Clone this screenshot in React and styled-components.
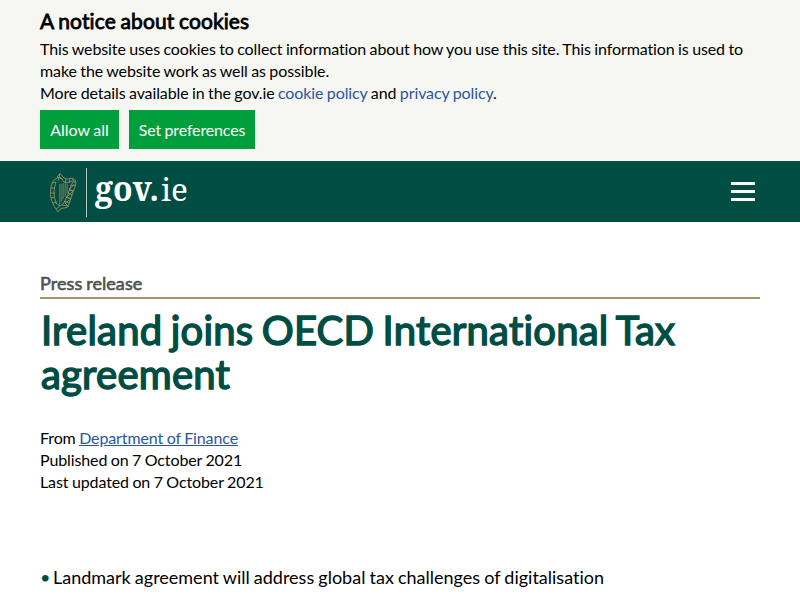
import React from 'react';
import styled, { createGlobalStyle } from 'styled-components';

const Global = createGlobalStyle`
  *{box-sizing:border-box}
  html,body{margin:0;background:#fff;overflow:hidden}
  body{font:400 16px/22px Lato,sans-serif;color:#000;font-variant-ligatures:none;letter-spacing:-.11px;word-spacing:-.5px;}
`;
const Cookie = styled.section`background:#f6f7f2;height:161px;padding:8px 40px 0;`;
const CookieTitle = styled.h2`margin:0 0 4px;font-size:21px;line-height:26px;font-weight:400;letter-spacing:.1px;word-spacing:-.8px;-webkit-text-stroke:.8px #000;`;
const Text = styled.p`margin:0;`;
const Link = styled.a`color:#2b55a2;text-decoration:${p => p.$underlined ? 'underline' : 'none'};`;
const Buttons = styled.div`display:flex;gap:10px;margin-top:6px;`;
const Button = styled.button`width:${p => p.$width}px;height:39px;padding:0;white-space:nowrap;border:0;background:#009f3b;color:#fff;font:16px/22px Lato,sans-serif;letter-spacing:${p => p.$tracking || 0}px;word-spacing:-.5px;`;
const Header = styled.header`height:61px;background:#004d44;display:flex;align-items:center;justify-content:space-between;padding:0 45px 0 40px;`;
const Logo = styled.svg`width:160px;height:61px;display:block;letter-spacing:0;word-spacing:0;`;
const Menu = styled.div`width:24px;display:grid;gap:5px;`;
const Bar = styled.span`height:3px;background:#fff;`;
const Main = styled.main`padding:51px 40px 0;`;
const Kind = styled.div`height:26px;border-bottom:2px solid #a39161;font-size:18px;line-height:21px;letter-spacing:.07px;word-spacing:-.8px;color:#505050;-webkit-text-stroke:.6px #505050;`;
const Title = styled.h1`margin:9px 0 0;padding-left:1px;font-size:40px;line-height:44px;font-weight:400;letter-spacing:.22px;word-spacing:-2.1px;color:#004d44;-webkit-text-stroke:1.5px #004d44;`;
const Meta = styled.div`margin-top:31px;`;
const List = styled.ul`list-style:none;margin:72px 0 0;padding:0;font-size:18px;line-height:24px;letter-spacing:0;`;
const Item = styled.li`display:flex;gap:2.5px;&::before{content:'•';color:#004d44;}`;

export default function App() {
  return <><Global />
    <Cookie>
      <CookieTitle>A notice about cookies</CookieTitle>
      <Text>This website uses cookies to collect information about how you use this site. This information is used to make the website work as well as possible.</Text>
      <Text>More details available in the gov.ie <Link>cookie policy</Link> and <Link>privacy policy</Link>.</Text>
      <Buttons><Button $width={79}>Allow all</Button><Button $width={126} $tracking={-.15}>Set preferences</Button></Buttons>
    </Cookie>
    <Header>
      <Logo viewBox="0 0 160 61" aria-label="gov.ie">
        <path d="M19 23L28 22V31L19 44Z" fill="#345f4b" />
        <path d="M19.5 23v21M21.5 23v18M23.5 22v16M25.5 22v14M27.5 22v10" stroke="#66794f" strokeWidth=".6" />
        <g fill="none" stroke="#958e5c" strokeWidth=".9" strokeLinejoin="round">
          <path d="M17 16L20 12.5L24 17Q28 19 32 17Q36 18 36 22Q35 27 33 31L28 46L20 48L18 51L16 48L14 45Q8 34 12 22Q14 17 20 16L24 21Q29 22 33 20" />
          <path d="M16 21Q12 31 16 42L20 45L24 42Q28 34 31 24L34 20M12 22l4-1M11 27l4 0M11 32l4 0M11 37l4-1M13 42l4-1M16 48l4-3M17 16l6 2M20 13l-2 7M26 18l-1 4M30 18l-1 4M32 17l3 5" />
          <path d="M31 24l4 1M29 28l4 2M28 32l4 2M26 36l5 2M24 40l5 2M22 44l6 1M34 23l-5 6 4 1-6 6 4 2-6 4 3 3" />
        </g>
        <path d="M46.5 7v49" stroke="#b9cbc8"/>
        <text x="55" y="40" fill="#fff" fontFamily="Noto Serif, Liberation Serif, serif" fontSize="34" fontWeight="700" textLength="64" lengthAdjust="spacingAndGlyphs">gov.</text>
        <text x="121" y="40" fill="#fff" fontFamily="Noto Serif, Liberation Serif, serif" fontSize="31" textLength="27" lengthAdjust="spacingAndGlyphs">ie</text>
      </Logo>
      <Menu><Bar /><Bar /><Bar /></Menu>
    </Header>
    <Main>
      <Kind>Press release</Kind>
      <Title>Ireland joins OECD International Tax agreement</Title>
      <Meta>
        <Text>From <Link $underlined>Department of Finance</Link></Text>
        <Text>Published on 7 October 2021</Text>
        <Text>Last updated on 7 October 2021</Text>
      </Meta>
      <List><Item>Landmark agreement will address global tax challenges of digitalisation</Item></List>
    </Main>
  </>;
}
